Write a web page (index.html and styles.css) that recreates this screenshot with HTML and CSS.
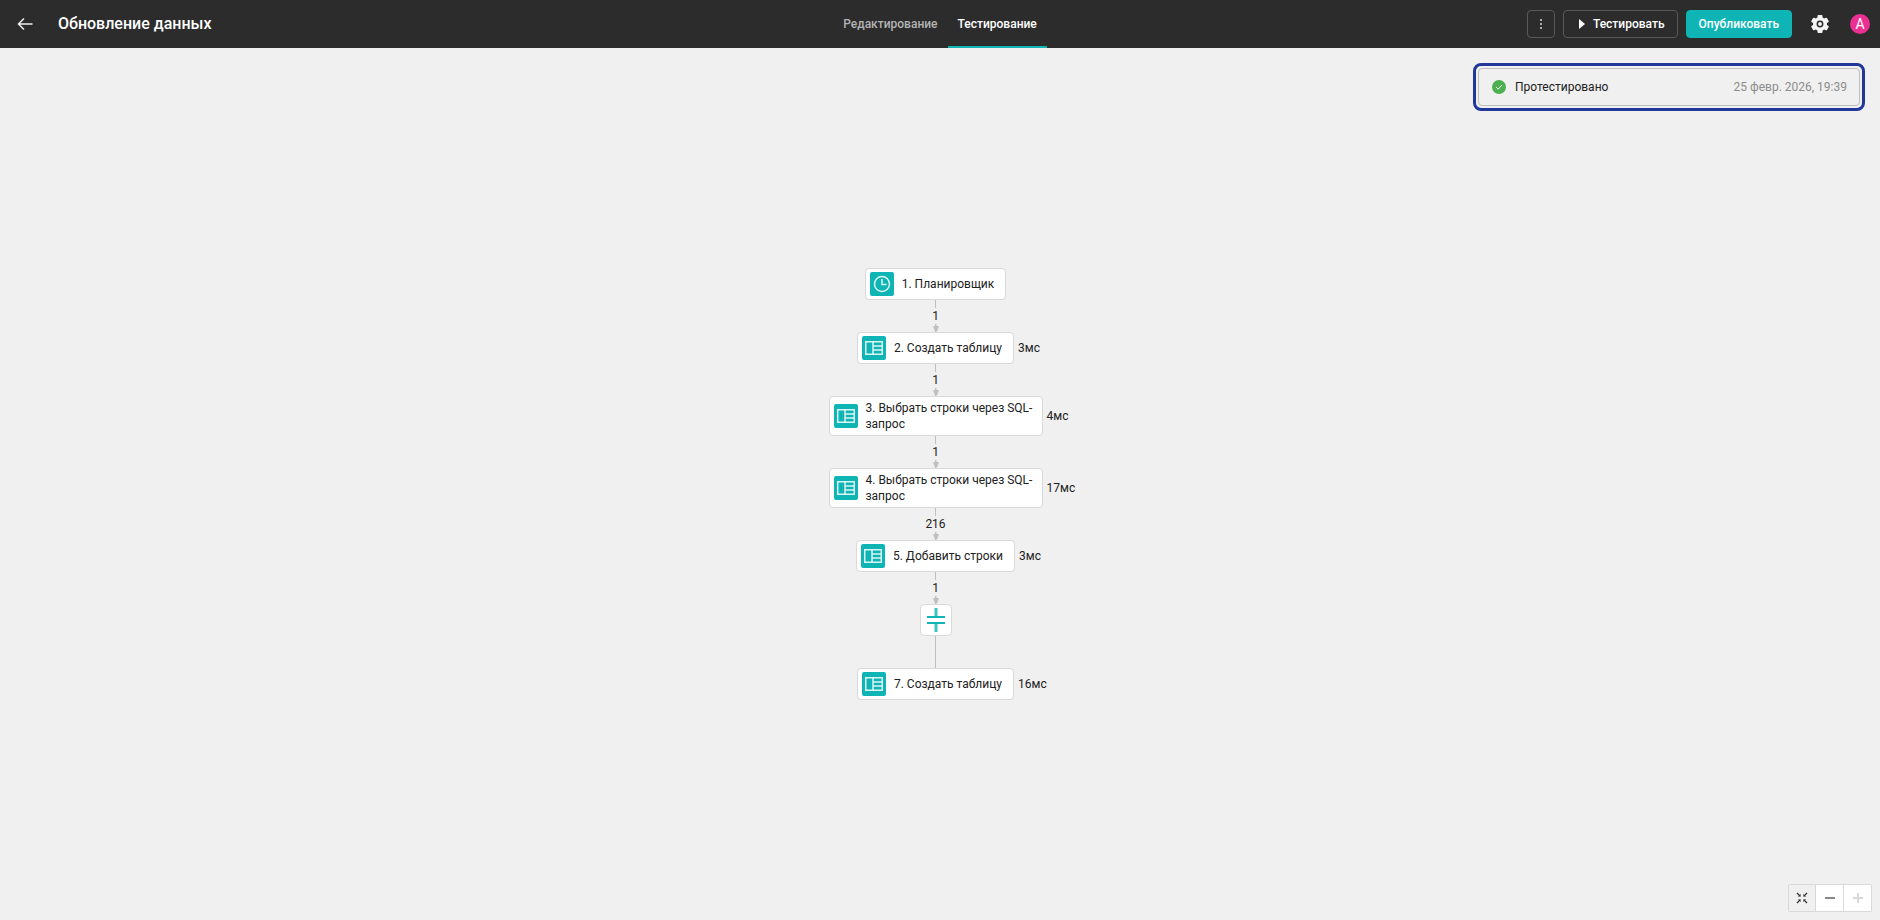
FILE: index.html
```html
<!DOCTYPE html>
<html lang="ru">
  <head>
    <meta charset="utf-8">
    <title>Обновление данных</title>
    <link rel="stylesheet" href="styles.css">
  </head>

  <body>
    <svg class="sprite" aria-hidden="true">
      <symbol id="icon-table" viewBox="0 0 24 24">
        <g fill="none" stroke="#fff" stroke-opacity=".85" stroke-width="1.5">
          <path d="M3.75 5.75h16.5v12.5H3.75z" />
          <path d="M11 6v12M11 10h9M11 14h9" />
        </g>
      </symbol>
      <symbol id="icon-arrow" viewBox="0 0 8 8">
        <path d="M3.500 0h1v2H7L5 7.500H3L1 2h2.500z" fill="#bfbfbf" />
      </symbol>
    </svg>

    <header class="header">
      <div class="header-left">
        <a class="back" href="#" aria-label="Назад">
          <svg width="16" height="14" viewBox="0 0 16 14" fill="none" stroke="#eee" stroke-width="1.5">
            <path d="M15.500 7H1.500M7 1.500L1.500 7 7 12.500" />
          </svg>
        </a>
        <h1 class="title">Обновление данных</h1>
      </div>

      <nav class="tabs">
        <a class="tab" href="#">Редактирование</a>
        <a class="tab tab-active" href="#">Тестирование</a>
      </nav>

      <div class="header-right">
        <button class="btn btn-more" aria-label="Ещё">
          <svg width="12" height="12" viewBox="0 0 12 12" fill="#aaa">
            <path d="M5 1h2v2H5zM5 5h2v2H5zM5 9h2v2H5z" />
          </svg>
        </button>
        <button class="btn btn-test">
          <svg width="6" height="10" viewBox="0 0 6 10"><path d="M0 0l6 5-6 5z" fill="#fff" /></svg>
          Тестировать
        </button>
        <button class="btn btn-publish">Опубликовать</button>
        <button class="settings" aria-label="Настройки">
          <svg width="18" height="18" viewBox="0 0 18 18">
            <g fill="#f5f5f5">
              <circle cx="9" cy="9" r="7" />
              <rect x="6.500" y="0" width="5" height="18" rx="1" />
              <rect x="6.500" y="0" width="5" height="18" rx="1" transform="rotate(60 9 9)" />
              <rect x="6.500" y="0" width="5" height="18" rx="1" transform="rotate(120 9 9)" />
            </g>
            <circle cx="9" cy="9" r="2.700" fill="#f5f5f5" stroke="#2c2c2c" stroke-width="1.500" />
          </svg>
        </button>
        <button class="avatar">А</button>
      </div>
    </header>

    <main class="canvas">
      <section class="status">
        <button class="status-row">
          <svg width="14" height="14" viewBox="0 0 14 14">
            <circle cx="7" cy="7" r="7" fill="#4caf50" />
            <path d="M4 7l2.200 2.200L10 5" fill="none" stroke="#fff" stroke-width="1" />
          </svg>
          <span>Протестировано</span>
          <time class="status-date">25 февр. 2026, 19:39</time>
        </button>
      </section>

      <div class="flow">
        <div class="step">
          <div class="node">
            <span class="node-icon">
              <svg width="24" height="24" viewBox="0 0 24 24" fill="none" stroke="#fff" stroke-opacity=".85" stroke-width="1.500">
                <circle cx="12" cy="12" r="7.500" />
                <path d="M12 7v5.500h4.500" />
              </svg>
            </span>
            <span class="node-name">1. Планировщик</span>
          </div>
        </div>
        <div class="link"><span class="count">1</span><svg class="arrow"><use href="#icon-arrow" /></svg></div>

        <div class="step">
          <div class="node">
            <span class="node-icon"><svg width="24" height="24"><use href="#icon-table" /></svg></span>
            <span class="node-name">2. Создать таблицу</span>
          </div>
          <span class="duration">3мс</span>
        </div>
        <div class="link"><span class="count">1</span><svg class="arrow"><use href="#icon-arrow" /></svg></div>

        <div class="step">
          <div class="node node-long">
            <span class="node-icon"><svg width="24" height="24"><use href="#icon-table" /></svg></span>
            <span class="node-name">3. Выбрать строки через SQL-<wbr>запрос</span>
          </div>
          <span class="duration">4мс</span>
        </div>
        <div class="link"><span class="count">1</span><svg class="arrow"><use href="#icon-arrow" /></svg></div>

        <div class="step">
          <div class="node node-long">
            <span class="node-icon"><svg width="24" height="24"><use href="#icon-table" /></svg></span>
            <span class="node-name">4. Выбрать строки через SQL-<wbr>запрос</span>
          </div>
          <span class="duration">17мс</span>
        </div>
        <div class="link"><span class="count">216</span><svg class="arrow"><use href="#icon-arrow" /></svg></div>

        <div class="step">
          <div class="node">
            <span class="node-icon"><svg width="24" height="24"><use href="#icon-table" /></svg></span>
            <span class="node-name">5. Добавить строки</span>
          </div>
          <span class="duration">3мс</span>
        </div>
        <div class="link"><span class="count">1</span><svg class="arrow"><use href="#icon-arrow" /></svg></div>

        <div class="step">
          <div class="node node-merge">
            <svg width="24" height="24" viewBox="0 0 24 24" fill="#0fb5b5">
              <path d="M3 8h18v2H3zM3 14h18v2H3z" />
              <path d="M10.500 0h3v8h-3zM10.500 16h3v8h-3z" fill-opacity=".8" />
            </svg>
          </div>
        </div>
        <div class="link"></div>

        <div class="step">
          <div class="node">
            <span class="node-icon"><svg width="24" height="24"><use href="#icon-table" /></svg></span>
            <span class="node-name">7. Создать таблицу</span>
          </div>
          <span class="duration">16мс</span>
        </div>
      </div>

      <div class="zoom">
        <button class="zoom-btn zoom-fit" aria-label="По размеру экрана">
          <svg width="12" height="12" viewBox="0 0 12 12" fill="none" stroke="#333" stroke-width="1">
            <path d="M1 1l3 3M11 1L8 4M1 11l3-3M11 11L8 8" stroke-width="1.300" />
            <path d="M2 4.500h2.500V2M10 4.500H7.500V2M2 7.500h2.500V10M10 7.500H7.500V10" stroke-opacity=".5" />
          </svg>
        </button>
        <button class="zoom-btn" aria-label="Уменьшить">
          <svg width="10" height="10" viewBox="0 0 10 10"><path d="M0 4h10v2H0z" fill="#888" /></svg>
        </button>
        <button class="zoom-btn" aria-label="Увеличить" disabled>
          <svg width="10" height="10" viewBox="0 0 10 10"><path d="M0 4h4V0h2v4h4v2H6v4H4V6H0z" fill="#d9d9d9" /></svg>
        </button>
      </div>
    </main>
  </body>
</html>
```
FILE: styles.css
```css
* {
  box-sizing: border-box;
}

body {
  display: flex;
  flex-direction: column;
  min-height: 100vh;
  margin: 0;
  background-color: #f0f0f0;
  color: #212121;
  font-family: Roboto, sans-serif;
  font-size: 12px;
  line-height: 16px;
}

button {
  padding: 0;
  border: none;
  background: none;
  color: inherit;
  font: inherit;
  cursor: pointer;
}

a {
  color: inherit;
  text-decoration: none;
}

svg {
  display: block;
  flex: none;
}

.sprite {
  position: absolute;
  width: 0;
  height: 0;
}

/* header */

.header {
  display: grid;
  grid-template-columns: 1fr auto 1fr;
  height: 48px;
  background-color: #2c2c2c;
  color: #fff;
}

.header-left {
  display: flex;
  align-items: center;
  gap: 25px;
  padding-left: 17px;
}

.title {
  margin: 0;
  font-size: 16px;
  font-weight: 500;
  line-height: 24px;
}

.tabs {
  display: flex;
}

.tab {
  display: flex;
  align-items: center;
  padding: 2px 10px 0;
  border-bottom: 2px solid transparent;
  color: #b3b3b3;
  font-weight: 500;
}

.tab-active {
  border-bottom-color: #0fb5b5;
  color: #fff;
}

.header-right {
  display: flex;
  align-items: center;
  justify-content: flex-end;
  gap: 8px;
  padding-right: 10px;
}

.btn {
  display: flex;
  align-items: center;
  justify-content: center;
  gap: 8px;
  height: 28px;
  padding: 0 12px;
  border: 1px solid #595959;
  border-radius: 4px;
  font-weight: 500;
}

.btn-more {
  width: 28px;
  padding: 0;
}

.btn-test {
  padding-left: 15px;
}

.btn-publish {
  border-color: #0fb5b5;
  background-color: #0fb5b5;
}

.settings {
  margin: 0 13px 0 11px;
}

.avatar {
  width: 20px;
  height: 20px;
  border-radius: 50%;
  background-color: #ec2f92;
  font-size: 14px;
}

/* canvas */

.canvas {
  position: relative;
  display: flex;
  flex: 1;
  align-items: center;
  justify-content: center;
  padding-right: 9px;
}

.status {
  position: absolute;
  top: 15px;
  right: 15px;
  width: 392px;
  padding: 2px;
  border: 3px solid #1f3899;
  border-radius: 8px;
}

.status-row {
  display: flex;
  align-items: center;
  gap: 9px;
  width: 100%;
  height: 38px;
  padding: 0 12px 0 13px;
  border: 1px solid #bfbfbf;
  border-radius: 4px;
}

.status-date {
  margin-left: auto;
  color: #8c8c8c;
}

.flow {
  display: flex;
  flex-direction: column;
}

.step {
  display: grid;
  grid-template-columns: 1fr auto 1fr;
  align-items: center;
}

.node {
  display: flex;
  grid-column: 2;
  align-items: center;
  gap: 8px;
  max-width: 214px;
  padding: 3px 11px 3px 4px;
  border: 1px solid #d9d9d9;
  border-radius: 4px;
  background-color: #fff;
}

.node-long {
  padding-right: 4px;
}

.node-icon {
  flex: none;
  border-radius: 2px;
  background-color: #0fb5b5;
}

.node-merge {
  padding: 3px;
}

.duration {
  padding-left: 4px;
}

.link {
  display: flex;
  flex-direction: column;
  align-items: center;
  height: 32px;
  background: linear-gradient(#bfbfbf, #bfbfbf) center / 1px 100% no-repeat;
}

.count {
  margin-top: 8px;
  background-color: #f0f0f0;
}

.arrow {
  width: 8px;
  height: 8px;
}

/* zoom controls */

.zoom {
  position: absolute;
  right: 8px;
  bottom: 8px;
  display: flex;
  border: 1px solid #d9d9d9;
  border-radius: 2px;
  background-color: #fff;
}

.zoom-btn {
  display: flex;
  align-items: center;
  justify-content: center;
  width: 26px;
  height: 26px;
}

.zoom-btn + .zoom-btn {
  width: 28px;
  border-left: 1px solid #d9d9d9;
}

.zoom-fit {
  background-color: #f0f0f0;
}
```
